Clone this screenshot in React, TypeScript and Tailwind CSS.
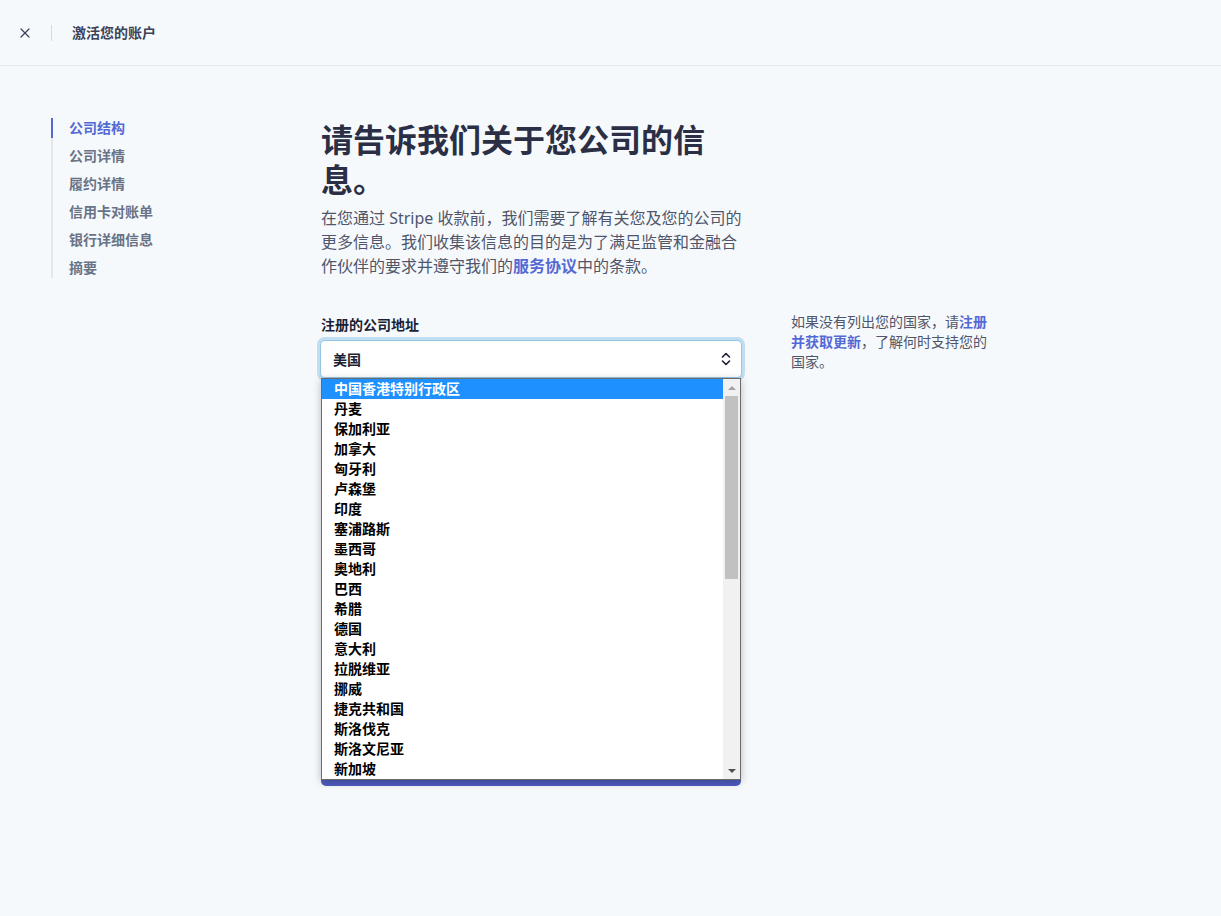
import { X } from "lucide-react";

const steps = ["公司结构", "公司详情", "履约详情", "信用卡对账单", "银行详细信息", "摘要"];

const countries = [
  "中国香港特别行政区",
  "丹麦",
  "保加利亚",
  "加拿大",
  "匈牙利",
  "卢森堡",
  "印度",
  "塞浦路斯",
  "墨西哥",
  "奥地利",
  "巴西",
  "希腊",
  "德国",
  "意大利",
  "拉脱维亚",
  "挪威",
  "捷克共和国",
  "斯洛伐克",
  "斯洛文尼亚",
  "新加坡",
];

function UpDown() {
  return (
    <svg width="10" height="14" viewBox="0 0 10 14" fill="none">
      <path d="M1.5 5L5 1.5L8.5 5" stroke="#1a1f36" strokeWidth="1.6" strokeLinecap="round" strokeLinejoin="round" />
      <path d="M1.5 9L5 12.5L8.5 9" stroke="#1a1f36" strokeWidth="1.6" strokeLinecap="round" strokeLinejoin="round" />
    </svg>
  );
}

function Dropdown() {
  return (
    <div className="absolute left-0 right-0 top-[37px] z-10 flex border border-[#6b6b6b] bg-white shadow-[0_2px_8px_rgba(0,0,0,0.25)]">
      <ul className="flex-1">
        {countries.map((c, i) => (
          <li
            key={c}
            className={`h-5 pl-3 text-[14px] font-semibold leading-5 ${
              i === 0 ? "bg-[#1e90ff] text-white" : "text-black"
            }`}
          >
            {c}
          </li>
        ))}
      </ul>
      {/* scrollbar */}
      <div className="flex w-[17px] flex-col bg-[#f1f1f1]">
        <div className="flex h-[17px] items-center justify-center">
          <div className="h-0 w-0 border-x-[4px] border-b-[4px] border-x-transparent border-b-[#a3a3a3]" />
        </div>
        <div className="mx-[2px] h-[183px] bg-[#c1c1c1]" />
        <div className="flex-1" />
        <div className="flex h-[17px] items-center justify-center">
          <div className="h-0 w-0 border-x-[4px] border-t-[4px] border-x-transparent border-t-[#505050]" />
        </div>
      </div>
    </div>
  );
}

export default function App() {
  return (
    <div
      className="min-h-[916px] bg-[#f6f9fc] text-[#1a1f36]"
      style={{ fontFamily: '"Noto Sans", "Noto Sans CJK SC", sans-serif' }}
    >
      {/* Header */}
      <header className="flex h-[66px] items-center border-b border-[#e3e8ee]">
        <button className="ml-[17px] flex h-4 w-4 items-center justify-center text-[#3c4257]">
          <X size={16} strokeWidth={1.8} />
        </button>
        <div className="ml-[18px] h-4 w-px bg-[#d5dbe1]" />
        <div className="ml-5 text-[14px] font-semibold text-[#3c4257]">激活您的账户</div>
      </header>

      <div className="flex pt-[52px]">
        {/* Sidebar */}
        <nav className="ml-[51px] w-[270px] shrink-0">
          <ul className="flex w-fit flex-col gap-2 border-l-2 border-[#e3e8ee]">
            {steps.map((s, i) => (
              <li
                key={s}
                className={`-ml-[2px] h-5 border-l-2 pl-4 text-[14px] font-semibold leading-5 ${
                  i === 0 ? "border-[#5469d4] text-[#5469d4]" : "border-transparent text-[#697386]"
                }`}
              >
                {s}
              </li>
            ))}
          </ul>
        </nav>

        {/* Main */}
        <main className="flex gap-[50px]">
          <div className="w-[420px]">
            <h1 className="pt-[2px] text-[32px] font-bold leading-10 text-[#2a2f45]">
              请告诉我们关于您公司的信息。
            </h1>
            <p className="mt-[6px] w-[428px] text-[16px] leading-6 text-[#4f566b]">
              在您通过 Stripe 收款前，我们需要了解有关您及您的公司的更多信息。我们收集该信息的目的是为了满足监管和金融合作伙伴的要求并遵守我们的
              <span className="font-semibold text-[#5469d4]">服务协议</span>中的条款。
            </p>

            <label className="mt-[37px] block text-[14px] font-semibold leading-5 text-[#1a1f36]">注册的公司地址</label>
            <div className="relative mt-[6px]">
              <div className="flex h-9 items-center justify-between rounded-[4px] bg-white pl-3 pr-[10px] shadow-[0_0_0_1px_rgba(50,151,211,0.3),0_0_0_4px_rgba(58,151,212,0.28)]">
                <span className="text-[14px] font-semibold text-[#1a1f36]">美国</span>
                <UpDown />
              </div>
              <Dropdown />
            </div>

            <button className="mt-[373px] flex h-9 w-full items-center justify-center rounded-[5px] bg-[#4f5cc1] text-[14px] font-semibold text-white">
              继续
            </button>
          </div>

          <aside className="w-[200px] pt-[194px] text-[14px] leading-5 text-[#4f566b]">
            如果没有列出您的国家，请<span className="font-semibold text-[#5469d4]">注册并获取更新</span>，了解何时支持您的国家。
          </aside>
        </main>
      </div>
    </div>
  );
}
